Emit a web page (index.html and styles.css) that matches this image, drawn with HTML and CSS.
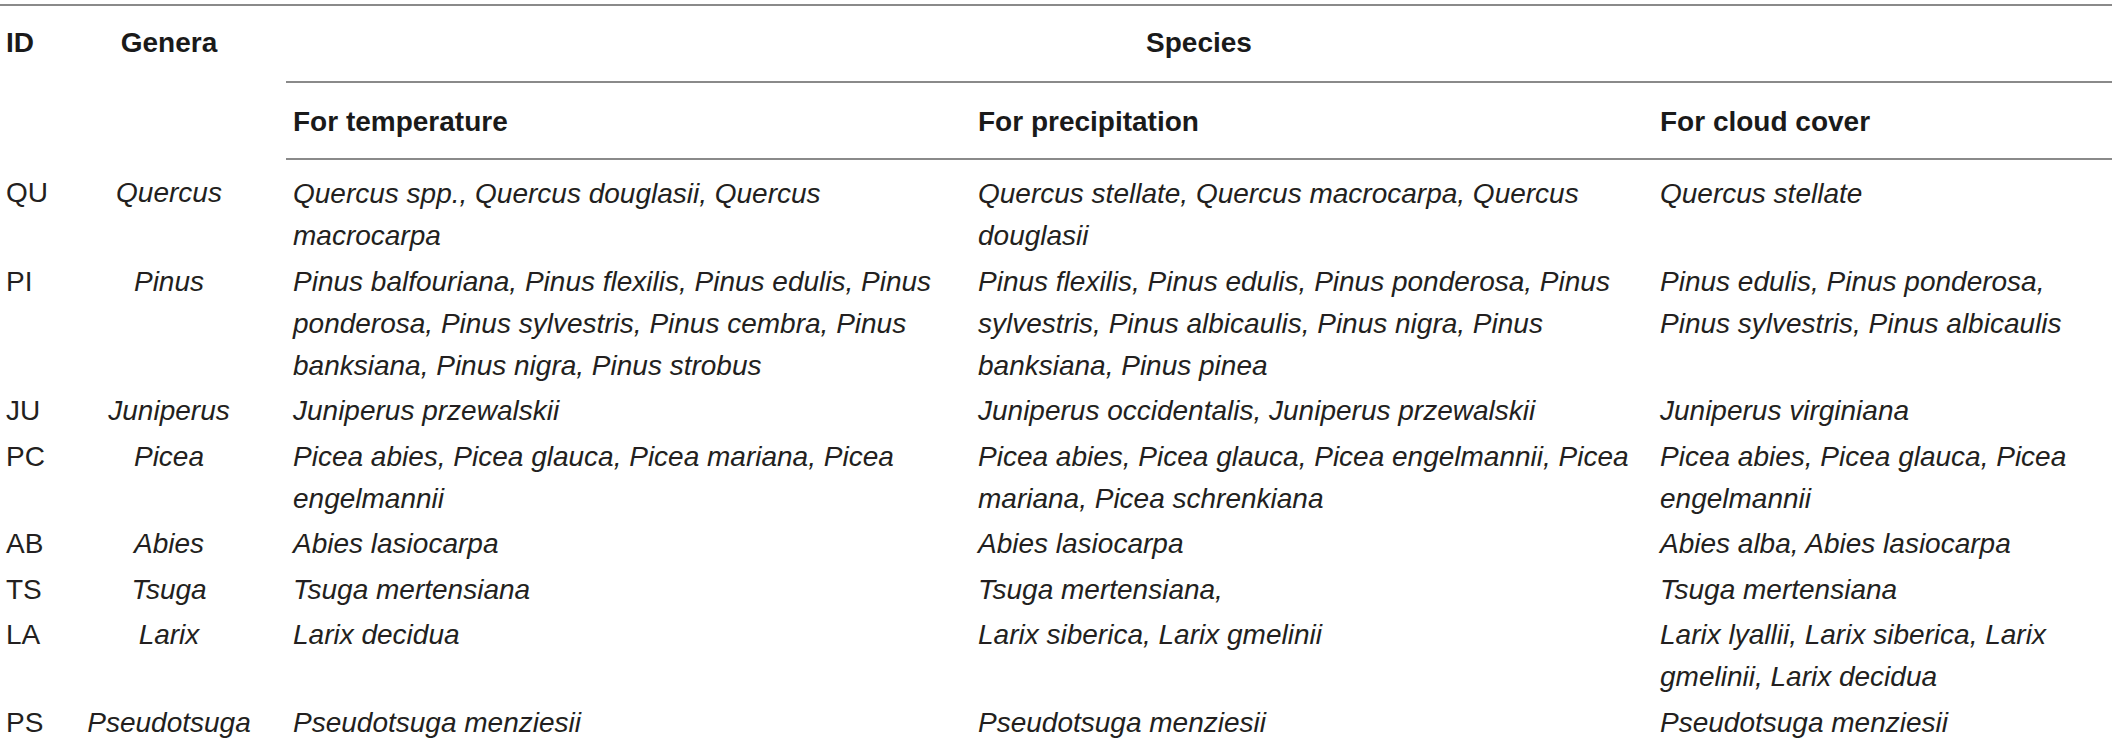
FILE: index.html
```html
<!DOCTYPE html>
<html lang="en">
<head>
<meta charset="UTF-8">
<meta name="viewport" content="width=device-width, initial-scale=1.0">
<title>Species per genus</title>
<link rel="stylesheet" href="styles.css">
</head>
<body>
<table class="species-table">
    <colgroup>
        <col class="col-id">
        <col class="col-genus">
        <col class="col-temp">
        <col class="col-prec">
        <col class="col-cloud">
    </colgroup>
    <thead>
        <tr>
            <th rowspan="2" class="id">ID</th>
            <th rowspan="2" class="genus">Genera</th>
            <th colspan="3" class="group">Species</th>
        </tr>
        <tr class="sub">
            <th>For temperature</th>
            <th>For precipitation</th>
            <th>For cloud cover</th>
        </tr>
    </thead>
    <tbody>
        <tr>
            <td class="id">QU</td>
            <td class="genus">Quercus</td>
            <td>Quercus spp., Quercus douglasii, Quercus macrocarpa</td>
            <td>Quercus stellate, Quercus macrocarpa, Quercus douglasii</td>
            <td>Quercus stellate</td>
        </tr>
        <tr>
            <td class="id">PI</td>
            <td class="genus">Pinus</td>
            <td>Pinus balfouriana, Pinus flexilis, Pinus edulis, Pinus ponderosa, Pinus sylvestris, Pinus cembra, Pinus banksiana, Pinus nigra, Pinus strobus</td>
            <td>Pinus flexilis, Pinus edulis, Pinus ponderosa, Pinus sylvestris, Pinus albicaulis, Pinus nigra, Pinus banksiana, Pinus pinea</td>
            <td>Pinus edulis, Pinus ponderosa, Pinus sylvestris, Pinus albicaulis</td>
        </tr>
        <tr>
            <td class="id">JU</td>
            <td class="genus">Juniperus</td>
            <td>Juniperus przewalskii</td>
            <td>Juniperus occidentalis, Juniperus przewalskii</td>
            <td>Juniperus virginiana</td>
        </tr>
        <tr>
            <td class="id">PC</td>
            <td class="genus">Picea</td>
            <td>Picea abies, Picea glauca, Picea mariana, Picea engelmannii</td>
            <td>Picea abies, Picea glauca, Picea engelmannii, Picea mariana, Picea schrenkiana</td>
            <td>Picea abies, Picea glauca, Picea engelmannii</td>
        </tr>
        <tr>
            <td class="id">AB</td>
            <td class="genus">Abies</td>
            <td>Abies lasiocarpa</td>
            <td>Abies lasiocarpa</td>
            <td>Abies alba, Abies lasiocarpa</td>
        </tr>
        <tr>
            <td class="id">TS</td>
            <td class="genus">Tsuga</td>
            <td>Tsuga mertensiana</td>
            <td>Tsuga mertensiana,</td>
            <td>Tsuga mertensiana</td>
        </tr>
        <tr>
            <td class="id">LA</td>
            <td class="genus">Larix</td>
            <td>Larix decidua</td>
            <td>Larix siberica, Larix gmelinii</td>
            <td>Larix lyallii, Larix siberica, Larix gmelinii, Larix decidua</td>
        </tr>
        <tr>
            <td class="id">PS</td>
            <td class="genus">Pseudotsuga</td>
            <td>Pseudotsuga menziesii</td>
            <td>Pseudotsuga menziesii</td>
            <td>Pseudotsuga menziesii</td>
        </tr>
    </tbody>
</table>
</body>
</html>
```

FILE: styles.css
```css
body { background: #ffffff; margin: 0; font-family: "Liberation Sans", Arial, sans-serif;
    color: #231f20;
}
.species-table { width: 2112px; margin-top: 4px; border-collapse: collapse;
    table-layout: fixed; border-top: 2px solid #8a8a8a; font-size: 28px;
    line-height: 42px;
}
.col-id { width: 52px; }
.col-genus { width: 234px; }
.col-temp { width: 685px; }
.col-prec { width: 682px; }
.col-cloud { width: 459px; }

th { font-weight: bold; text-align: left; vertical-align: top;
    padding: 16px 7px 17px; color: #1a1a1a;
}
th.id { padding-left: 6px; }
th.genus { text-align: center; }
th.group { text-align: center; border-bottom: 2px solid #8a8a8a; }
.sub th { padding: 18px 7px 15px; border-bottom: 2px solid #8a8a8a; }

td { font-style: italic; vertical-align: top; padding: 1px 7px 2.5px; }
td.id { font-style: normal; padding-left: 6px; }
td.genus { text-align: center; }
tbody tr:first-child td { padding-top: 13px; }
```
